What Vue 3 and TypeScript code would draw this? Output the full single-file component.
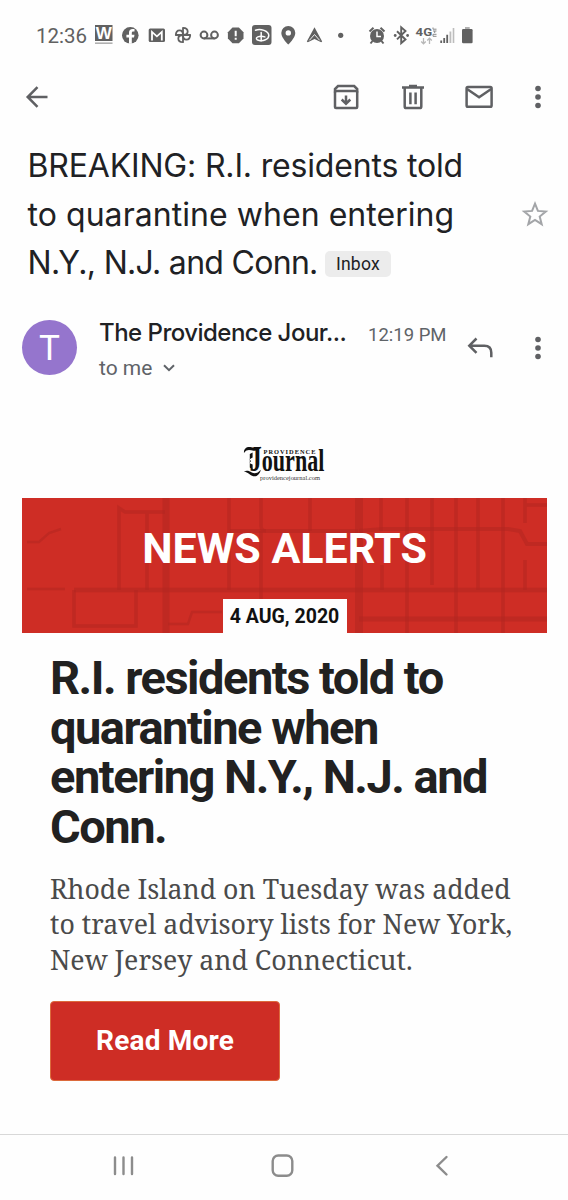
<script setup lang="ts">
interface Alert {
  subject: string[]
  label: string
  sender: string
  time: string
  date: string
  headline: string[]
  summary: string[]
}

const mail: Alert = {
  subject: ['BREAKING: R.I. residents told', 'to quarantine when entering', 'N.Y., N.J. and Conn.'],
  label: 'Inbox',
  sender: 'The Providence Jour...',
  time: '12:19 PM',
  date: '4 AUG, 2020',
  headline: ['R.I. residents told to', 'quarantine when', 'entering N.Y., N.J. and', 'Conn.'],
  summary: [
    'Rhode Island on Tuesday was added',
    'to travel advisory lists for New York,',
    'New Jersey and Connecticut.',
  ],
}

const petals: number[] = [0, 90, 180, 270]
</script>

<template>
  <div class="screen">
    <header class="status">
      <span class="clock">12:36</span>
      <svg class="notifications" viewBox="92 20 260 30" width="260" height="30" fill="#616161">
        <path d="M95 25h17.5v16H95z" />
        <path d="M95 42.4h17.5v1.6H95z" opacity=".5" />
        <text x="103.7" y="38.6" text-anchor="middle" class="w-glyph">W</text>

        <circle cx="130.3" cy="35.3" r="8.3" />
        <path d="M129 43.8v-6.4h-2.6v-2.7h2.6v-2.1c0-2.4 1.4-3.7 3.5-3.7l2 .2v2.3h-1.2c-1.2 0-1.5.7-1.5 1.4v1.9h2.7l-.5 2.7h-2.2v6.4z" fill="#fff" />

        <rect x="148.7" y="28.5" width="16.3" height="13.6" rx="1.5" />
        <path d="M152 40.5v-8.6l4.9 4.4 4.9-4.4v8.6" fill="none" stroke="#fff" stroke-width="1.8" />

        <g fill="none" stroke="#616161" stroke-width="1.8" stroke-linejoin="round">
          <path
            v-for="a in petals"
            :key="a"
            :transform="`rotate(${a} 183 35)`"
            d="M183 35v-7.2c3 .1 4.7 1.8 4.7 3.8 0 1.8-1.5 3.4-4.7 3.4"
          />
        </g>

        <g fill="none" stroke="#616161" stroke-width="2">
          <circle cx="204" cy="35" r="3.4" />
          <circle cx="214.5" cy="35" r="3.4" />
          <path d="M204 38.4h10.5" />
        </g>

        <path d="M232.5 27.6h6.4l4.6 4.6v6.4l-4.6 4.6h-6.4l-4.6-4.6v-6.4z" />
        <path d="M234.7 30.8h2v5.4h-2zM234.7 37.8h2v2h-2z" fill="#fff" />

        <rect x="252" y="25" width="19.5" height="20" rx="3" />
        <g fill="none" stroke="#fff" stroke-width="1.5" stroke-linecap="round">
          <path d="M255.5 30.2c5-2.2 13.3.8 13.3 5.3 0 4-6 5.8-9.6 5-3.4-.7-3.6-2.7-1.4-3.6 2.2-.8 5.2-.6 7 0" />
          <path d="M261.2 32.5v8.3" />
        </g>

        <path d="M288.3 26a7 7 0 0 0-7 7c0 5 7 11.5 7 11.5s7-6.5 7-11.5a7 7 0 0 0-7-7zm0 4.2a2.7 2.7 0 1 1 0 5.4 2.7 2.7 0 0 1 0-5.4z" />

        <path d="M314.5 27.3 306.8 41.5l1 .8 6.7-3.3 6.7 3.3 1-.8z" />
        <path d="m309.4 40.3 5.1-5.8 5.1 5.8" fill="none" stroke="#fff" stroke-width=".9" />

        <circle cx="340.7" cy="35.3" r="2.6" />
      </svg>
      <svg class="system" viewBox="366 20 112 30" width="112" height="30" fill="#616161">
        <circle cx="377" cy="36" r="7" />
        <path d="m369.5 31.5 4-3.8M384.5 31.5l-4-3.8M372.5 41l-2 2.5M381.5 41l2 2.5" stroke="#616161" stroke-width="2" />
        <path d="M377 31.5v5h4" fill="none" stroke="#fff" stroke-width="1.5" />

        <path d="m397 31.3 8.5 8.2-4.3 3.6V27.3l4.3 3.7-8.5 8.4" fill="none" stroke="#616161" stroke-width="1.9" />
        <circle cx="395.2" cy="35.5" r="1.4" />
        <circle cx="407.6" cy="35.5" r="1.4" />

        <text x="415.6" y="36.2" class="net" textLength="16.5" lengthAdjust="spacingAndGlyphs">4G</text>
        <path d="M433 27.5v1.7h3.5M433 31h3.5M434.7 31v2M436.5 34.3H433v2h3.5" fill="none" stroke="#8a8a8a" stroke-width="1" />
        <path d="M423.5 38v5.5m-2.3-2 2.3 2.3 2.3-2.3M429.5 44v-5.5m-2.3 2 2.3-2.3 2.3 2.3" fill="none" stroke="#b8b8b8" stroke-width="1.3" />

        <path d="M440.3 40.5h1.8V43h-1.8zM443.3 38h1.8v5h-1.8zM446.3 34.8h1.8V43h-1.8z" />
        <path d="M449.5 31.5h1.8V43h-1.8zM452.7 28h1.6v15h-1.6z" fill="#bdbdbd" />

        <rect x="462" y="29" width="10.6" height="14.3" rx="1.2" />
        <path d="M465 27h4.7v2H465z" fill="#b0b0b0" />
      </svg>
    </header>

    <nav class="toolbar">
      <svg class="back" viewBox="0 0 24 24" width="24" height="24">
        <path d="M22.500 12H3.200M12.500 2.200 2.700 12l9.800 9.800" />
      </svg>
      <svg class="archive" viewBox="0 0 28 28" width="28" height="28">
        <rect x="3" y="8" width="22.2" height="17" rx="1" />
        <path d="M3 9.500V6l3-3h16.200l3 3v3.500M14 12.500v8M9.700 16.500l4.300 4.300 4.300-4.300" />
      </svg>
      <svg class="trash" viewBox="0 0 26 28" width="26" height="28">
        <path d="M4.700 5v18.500c0 1 .7 1.600 1.600 1.600h13.400c.9 0 1.600-.6 1.600-1.600V5M2 4.600h22M9 3h8M10.400 9.500v11.800M15.600 9.500v11.800" />
      </svg>
      <svg class="mail" viewBox="0 0 30 26" width="30" height="26">
        <rect x="2.6" y="3" width="25" height="19.8" rx="1.3" />
        <path d="m3 5 12.100 8.300L27.200 5" />
      </svg>
      <svg class="dots" viewBox="0 0 8 26" width="8" height="26">
        <circle cx="4" cy="4.5" r="2.8" /><circle cx="4" cy="13" r="2.8" /><circle cx="4" cy="21.5" r="2.8" />
      </svg>
    </nav>

    <section class="subject">
      <h1>
        <span v-for="(line, i) in mail.subject" :key="line" class="line">
          <span>{{ line }}</span>
          <span v-if="i === mail.subject.length - 1" class="chip">{{ mail.label }}</span>
        </span>
      </h1>
      <svg class="star" viewBox="0 0 28 28" width="28" height="28">
        <path d="m14 3.600 2.900 7.300 7.900.6-6.100 5 2 7.700L14 19.900l-6.700 4.300 2-7.700-6.100-5 7.900-.6z" />
      </svg>
    </section>

    <section class="from">
      <div class="avatar">T</div>
      <div class="who">
        <div class="top">
          <span class="sender">{{ mail.sender }}</span>
          <span class="time">{{ mail.time }}</span>
        </div>
        <div class="to">
          <span>to me</span>
          <svg viewBox="0 0 14 10" width="14" height="10"><path d="m2 2.200 5 5 5-5" /></svg>
        </div>
      </div>
      <svg class="reply" viewBox="0 0 28 24" width="28" height="24">
        <path d="M10.500 2.500 3.300 9.700l7.200 7.200M3.500 9.700h14.800c4.400 0 7 2.600 7 7v4.500" />
      </svg>
      <svg class="dots" viewBox="0 0 8 26" width="8" height="26">
        <circle cx="4" cy="4.5" r="2.8" /><circle cx="4" cy="13" r="2.8" /><circle cx="4" cy="21.5" r="2.8" />
      </svg>
    </section>

    <main class="letter">
      <svg class="masthead" viewBox="240 440 90 46" width="90" height="46">
        <text transform="translate(249.5 471.4) scale(.68 1)" class="mast-name"><tspan class="initial">J</tspan><tspan>ournal</tspan></text>
        <text x="263.5" y="454.4" class="mast-small" textLength="52" lengthAdjust="spacing">PROVIDENCE</text>
        <path d="M244 453c-.5-4.500 3-7 7.500-5.700 3.500 1 6 1.200 9-.8-.8 3.200-3.300 4.600-7 4.200-3.500-.5-6.500-2-9.500 2.300zM243.800 471.500c3-1.300 5.500-.5 8 1 3 1.700 6.200.5 9-2.800-1 4.500-4 7.300-7.500 6.500-3.500-.9-5-4-9.500-4.700zM249.800 454l2.800-1.500v5l-3.400 2 2 1.500-2 2 3.400 1.500v5l-2.800-2z" />
        <text x="260" y="480" class="mast-url" textLength="60" lengthAdjust="spacingAndGlyphs">providencejournal.com</text>
      </svg>

      <div class="banner">
        <svg class="streets" viewBox="22 498 525 135" width="525" height="135">
          <g fill="none" stroke="#b32620" stroke-opacity=".55" stroke-width="3.5">
            <path d="M166 498v135" stroke-width="7" />
            <path d="M359 498v135" stroke-width="8" />
            <path d="M74 590h473" stroke-width="4.5" />
            <path d="M359 619h188" stroke-width="5" />
            <path d="M230 531h128M359 531l24-2h125l12 2 7 13h20" stroke-width="4" />
            <path d="M119 590v-82l6 4h40M147 511v79M74 590v36h62v-36" />
            <path d="M229 498v92M261 498v28c0 3 2 5 5 5M261 531v68M310 498v33" />
            <path d="M381 498v33M382 565v25M407 498v135M432 498v87M456 498v135M478 498v92M503 498v135M525 498v25M525 560v30M526 505h21" />
            <path d="M27 542h12l10-9 12-4M27 589h38M168 624h20l4-12h30" stroke-width="2.5" />
          </g>
        </svg>
        <h2>NEWS ALERTS</h2>
        <div class="date">{{ mail.date }}</div>
      </div>

      <article>
        <h3><span v-for="line in mail.headline" :key="line" class="line">{{ line }}</span></h3>
        <p><span v-for="line in mail.summary" :key="line" class="line">{{ line }}</span></p>
        <a class="more">Read More</a>
      </article>
    </main>

    <footer class="keys">
      <svg viewBox="112 1153 24 25" width="24" height="25"><path d="M115 1157.500v16.500M123.500 1157.500v16.500M132 1157.500v16.500" /></svg>
      <svg viewBox="270 1153 26 25" width="26" height="25"><rect x="272.7" y="1155.5" width="19.6" height="20.2" rx="5.5" /></svg>
      <svg viewBox="434 1153 16 25" width="16" height="25"><path d="m446.500 1157-9 8.700 9 8.800" /></svg>
    </footer>
  </div>
</template>

<style>
body {
  background: #fdfdfd;
}
</style>

<style scoped>
.screen {
  display: flex;
  flex-direction: column;
  width: 568px;
  height: 1200px;
  overflow: hidden;
  background: #fefefe;
  color: #202124;
  font-family: Roboto, sans-serif;
}
svg {
  flex: none;
  display: block;
}
.line {
  display: block;
  white-space: nowrap;
}

.status {
  display: flex;
  height: 70px;
  padding-left: 36px;
  box-sizing: border-box;
}
.status svg {
  margin-top: 20px;
}
.clock {
  width: 56px;
  padding-top: 24px;
  font-size: 20.5px;
  line-height: 24px;
  color: #616161;
}
.system {
  margin-left: 14px;
}
.w-glyph {
  font: bold 17px "Liberation Sans", sans-serif;
  fill: #fff;
}
.net {
  font: 700 11.5px Roboto, sans-serif;
}

.toolbar {
  display: flex;
  align-items: center;
  height: 54px;
  padding-left: 25px;
}
.toolbar svg,
.reply {
  fill: none;
  stroke: #5f6063;
  stroke-width: 2.5;
}
.archive {
  margin-left: 282.5px;
}
.trash {
  margin-left: 40px;
}
.mail {
  margin-left: 38px;
}
.toolbar .dots {
  margin-left: 40px;
}
.toolbar .dots,
.from .dots {
  fill: #5f6063;
  stroke: none;
}

.subject {
  display: flex;
  align-items: center;
  height: 147px;
  margin-top: 17px;
  padding-left: 27.5px;
}
h1 {
  width: 493.5px;
  margin: 0;
  padding-top: 1px;
  font: 400 32px/48.7px Inter, sans-serif;
}
h1 .line {
  display: flex;
  align-items: center;
  letter-spacing: -0.17px;
}
h1 .line:nth-child(2) {
  letter-spacing: 0.05px;
}
h1 .line:nth-child(3) {
  letter-spacing: -0.7px;
}
.chip {
  margin-left: 7px;
  width: 66.5px;
  height: 26px;
  border-radius: 5px;
  background: #ececec;
  font: 17.6px/26px Roboto, sans-serif;
  letter-spacing: 0.2px;
  text-align: center;
}
.star {
  margin-top: -2px;
  fill: none;
  stroke: #a3a5a8;
  stroke-width: 2;
}

.from {
  display: flex;
  align-items: center;
  height: 60px;
  margin-top: 29.5px;
  padding-left: 22px;
}
.avatar {
  width: 55px;
  height: 55px;
  border-radius: 50%;
  background: #9575cd;
  color: #fff;
  font-size: 35px;
  line-height: 58px;
  text-align: center;
}
.who {
  width: 369px;
  margin-left: 22px;
  padding-top: 5px;
}
.top {
  display: flex;
  align-items: baseline;
  line-height: 34px;
}
.sender {
  width: 269px;
  font: 500 24px/34px Inter, sans-serif;
  letter-spacing: -0.52px;
  white-space: nowrap;
}
.time {
  font-size: 18.5px;
  color: #5f6368;
}
.to {
  display: flex;
  align-items: center;
  gap: 10px;
  margin-top: -1px;
  font-size: 21px;
  line-height: 34px;
  color: #5f6368;
}
.to svg {
  fill: none;
  stroke: #5f6368;
  stroke-width: 2;
}
.reply {
  margin-left: -2px;
}
.from .dots {
  margin-left: 39.5px;
}

.letter {
  flex: 1;
  padding: 62px 21px 0 22px;
}
.masthead {
  margin-left: 218px;
  fill: #111;
}
.mast-small {
  font: bold 6.4px "Liberation Serif", serif;
}
.mast-name {
  font: bold 32.5px "Liberation Serif", serif;
}
.initial {
  font-size: 36px;
}
.mast-url {
  font: 7px "Liberation Serif", serif;
  fill: #333;
}
.banner {
  display: flex;
  flex-direction: column;
  align-items: center;
  position: relative;
  height: 135px;
  margin-top: 12.5px;
  background: #ce2d25;
}
.streets {
  position: absolute;
  inset: 0;
}
h2 {
  position: relative;
  margin: 25.4px 0 0;
  font: 700 43px/50px Roboto, sans-serif;
  color: #fff;
}
.date {
  position: relative;
  width: 124px;
  height: 34px;
  margin-top: auto;
  background: #fefefe;
  color: #111;
  font: 700 19.5px/36px Roboto, sans-serif;
  text-align: center;
}
article {
  padding: 20px 0 0 28px;
}
h3 {
  margin: 0;
  font: 700 47px/49.5px Roboto, sans-serif;
  letter-spacing: -1.5px;
  color: #212121;
}
p {
  margin: 20px 0 0;
  font: 26.7px/35.3px "Noto Serif", "DejaVu Serif Condensed", serif;
  color: #4a4a4a;
}
.more {
  display: block;
  box-sizing: border-box;
  width: 230px;
  height: 80px;
  margin-top: 24.5px;
  border: 1.5px solid #dc6a3c;
  border-radius: 4px;
  background: #ce2d25;
  color: #fff;
  font: 700 28px/78px Roboto, sans-serif;
  letter-spacing: 0.2px;
  text-align: center;
}

.keys {
  display: flex;
  align-items: center;
  height: 66px;
  box-sizing: border-box;
  border-top: 1.5px solid #d8d8d8;
  padding: 0 0 4px 112px;
}
.keys svg {
  fill: none;
  stroke: #8c8c8c;
  stroke-width: 2.4;
  stroke-linecap: round;
}
.keys svg:nth-child(2) {
  margin-left: 134px;
}
.keys svg:nth-child(3) {
  margin-left: 138px;
}
</style>
